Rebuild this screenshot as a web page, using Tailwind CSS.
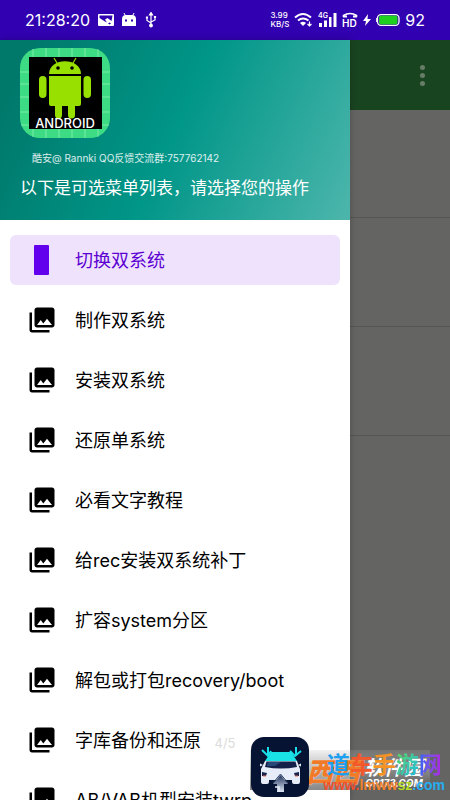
<!DOCTYPE html>
<html lang="zh-CN">
<head>
<meta charset="utf-8">
<meta name="viewport" content="width=device-width, initial-scale=1">
<title>双系统工具</title>
<script src="https://cdn.jsdelivr.net/npm/@tailwindcss/browser@4"></script>
</head>
<body class="h-screen overflow-hidden bg-[#646563] font-['Inter','Noto_Sans_CJK_SC',sans-serif] text-black">
<svg class="hidden" aria-hidden="true">
  <symbol id="photos" viewBox="0 0 24 24"><path d="M22 16V4c0-1.100-.9-2-2-2H8c-1.100 0-2 .9-2 2v12c0 1.100.9 2 2 2h12c1.100 0 2-.9 2-2zm-11-4 2.030 2.710L16 11l4 5H8l3-4zM2 6v14c0 1.100.9 2 2 2h14v-2H4V6H2z"/></symbol>
</svg>
<div class="relative flex h-full flex-col overflow-hidden">
  <header class="flex h-10 shrink-0 items-center justify-between bg-[#3100b0] pr-[25px] pl-[25px] text-white">
    <div class="flex items-center gap-2">
      <time class="text-base">21:28:20</time>
      <svg class="h-3 w-4" viewBox="0 0 16 12" aria-hidden="true"><path fill="#fff" fill-rule="evenodd" d="M1 0h14q1 0 1 1v10q0 1-1 1H1q-1 0-1-1V1q0-1 1-1zM1.500 1.500v2.500L7 7.500l2 1L7 5.500 9.500 4l4 3L14.500 1.500zM10 9.500l1.500 1L13 9.500l-1.500-1z"/></svg>
      <svg class="h-3.5 w-3.5" viewBox="0 0 14 14" aria-hidden="true"><path d="M2 0l1.500 3M12 0l-1.500 3" stroke="#fff"/><path fill="#fff" fill-rule="evenodd" d="M0 13V6q0-4 4-4h6q4 0 4 4v7zM3 6.500h2v2H3zM9 6.500h2v2H9z"/></svg>
      <svg class="h-4 w-3.5" viewBox="0 0 14 16" fill="none" stroke="#fff" stroke-width="1.200" aria-hidden="true"><path d="M7 2v11M7 11 3 8.500V6M7 10l4-2V5"/><path fill="#fff" d="M7 .5 5.500 3h3zM2.500 5h1v1h-1zM10.500 4.500h1v1h-1z"/><circle cx="7" cy="13.500" r="1.300" fill="#fff"/></svg>
    </div>
    <div class="flex items-center gap-[5px]">
      <div class="text-[8px] leading-[9px] font-medium"><div>3.99</div><div>KB/S</div></div>
      <svg class="h-4 w-[19px]" viewBox="0 0 19 16" fill="none" stroke="#fff" stroke-width="2" aria-hidden="true"><path d="M1 5.500q8-7 16 0M4 8.500q5-4 10.500 0"/><path d="M6 11q3-2.500 6 0l-3 3z" fill="#fff" stroke="none"/><path d="M15.500 9.500v4M13.500 12l2 2 2-2" stroke-width="1.200"/></svg>
      <svg class="h-4 w-[19px]" viewBox="0 0 19 16" aria-hidden="true"><path fill="#fff" d="M1 11h3v4H1zM6 8.500h3V15H6zM11 5h2.500v10H11zM15.500 1h3v14h-3z"/><text x="0" y="6" font-size="7" font-weight="600" fill="#fff">4G</text></svg>
      <svg class="h-4 w-4" viewBox="0 0 16 16" fill="none" stroke="#fff" stroke-width="1.600" aria-hidden="true"><path d="M1.500 5V3.500Q8-.5 14.500 3.500V5"/><path d="M1 4.500h4M11 4.500h4" stroke-width="2"/><text x="0" y="15" font-size="10" font-weight="600" fill="#fff" stroke="none">HD</text></svg>
      <svg class="h-3 w-2" viewBox="0 0 8 12" aria-hidden="true"><path fill="#fff" d="M5 0 0 7h3l-1 5 6-7H4.500z"/></svg>
      <svg class="h-3 w-6" viewBox="0 0 24 12" aria-hidden="true"><rect x="1.500" y=".7" width="21.500" height="10.600" rx="3.500" fill="none" stroke="#fff" stroke-width="1.300"/><rect x="3" y="1.500" width="18.500" height="9" rx="2" fill="#20d020"/><path d="M.7 4v4" stroke="#fff"/></svg>
      <span class="text-base">92</span>
    </div>
  </header>

  <main class="flex-1 bg-[#646563]">
    <div class="flex h-[70px] items-center justify-end bg-[#194420] pr-4">
      <button type="button" aria-label="更多选项" class="flex h-10 w-6 flex-col items-center justify-center gap-[3px]">
        <span class="size-[5px] rounded-full bg-[#687c68]"></span><span class="size-[5px] rounded-full bg-[#687c68]"></span><span class="size-[5px] rounded-full bg-[#687c68]"></span>
      </button>
    </div>
    <div class="h-[108px] border-b border-[#565755]"></div>
    <div class="h-[109px] border-b border-[#565755]"></div>
    <div class="h-[109px] border-b border-[#565755]"></div>
  </main>

  <aside class="absolute top-10 bottom-0 left-0 w-[350px] overflow-hidden bg-white shadow-[0_0_6px_rgba(0,0,0,0.25)]">
    <div class="flex h-[180px] flex-col bg-linear-[115deg,#00796b_8%,#009688_50%,#4db6ac] px-5 pt-2 text-white">
      <svg class="size-[90px]" viewBox="0 0 90 90" role="img" aria-label="Android">
        <rect width="90" height="90" rx="20" fill="#3ddc84"/>
        <path d="M13 1v88M26 0v90M39 0v90M52 0v90M65 0v90M78 1v88M0 24h90M0 36h90M0 49h90M0 64h90M1 77h88" stroke="#8af0b4" stroke-width=".8"/>
        <rect x="9" y="9" width="73" height="72" fill="#000"/>
        <g fill="#97e000"><path d="M29 26c0-17 32-17 32 0z"/><path d="M29 28h32v28q0 2-2 2h-4v9a3.500 3.500 0 0 1-7 0v-9h-6v9a3.500 3.500 0 0 1-7 0v-9h-4q-2 0-2-2z"/><rect x="19" y="28" width="7.500" height="22" rx="3.700"/><rect x="63.500" y="28" width="7.500" height="22" rx="3.700"/></g>
        <path d="M37 15l-3-5M53 15l3-5" stroke="#97e000" stroke-width="1.200"/><circle cx="38" cy="20" r="1.800"/><circle cx="52" cy="20" r="1.800"/>
        <text x="45" y="80" text-anchor="middle" font-size="13" font-weight="500" fill="#fff">ANDROID</text>
      </svg>
      <p class="mt-3 pl-3 text-[10px] leading-4 text-white/85">酷安@ Rannki QQ反馈交流群:757762142</p>
      <p class="mt-2 text-[17px] leading-7 whitespace-nowrap">以下是可选菜单列表，请选择您的操作</p>
    </div>
    <nav class="flex flex-col gap-2.5 px-2.5 pt-[15px] text-[18px]">
      <a href="#" aria-current="page" class="flex h-[50px] shrink-0 items-center gap-[18px] rounded-md bg-[#efe2fc] pl-[17px] text-[#5c00d2]"><svg class="size-[30px]" viewBox="0 0 30 30" fill="#6200ee" aria-hidden="true"><rect x="7" width="15" height="30" rx="1"/></svg>切换双系统</a>
      <a href="#" class="flex h-[50px] shrink-0 items-center gap-[18px] pl-[17px]"><svg class="size-[30px]"><use href="#photos"/></svg>制作双系统</a>
      <a href="#" class="flex h-[50px] shrink-0 items-center gap-[18px] pl-[17px]"><svg class="size-[30px]"><use href="#photos"/></svg>安装双系统</a>
      <a href="#" class="flex h-[50px] shrink-0 items-center gap-[18px] pl-[17px]"><svg class="size-[30px]"><use href="#photos"/></svg>还原单系统</a>
      <a href="#" class="flex h-[50px] shrink-0 items-center gap-[18px] pl-[17px]"><svg class="size-[30px]"><use href="#photos"/></svg>必看文字教程</a>
      <a href="#" class="flex h-[50px] shrink-0 items-center gap-[18px] pl-[17px]"><svg class="size-[30px]"><use href="#photos"/></svg>给rec安装双系统补丁</a>
      <a href="#" class="flex h-[50px] shrink-0 items-center gap-[18px] pl-[17px]"><svg class="size-[30px]"><use href="#photos"/></svg>扩容system分区</a>
      <a href="#" class="flex h-[50px] shrink-0 items-center gap-[18px] pl-[17px]"><svg class="size-[30px]"><use href="#photos"/></svg>解包或打包recovery/boot</a>
      <a href="#" class="flex h-[50px] shrink-0 items-center gap-[18px] pl-[17px]"><svg class="size-[30px]"><use href="#photos"/></svg>字库备份和还原</a>
      <a href="#" class="flex h-[50px] shrink-0 items-center gap-[18px] pl-[17px]"><svg class="size-[30px]"><use href="#photos"/></svg>AB/VAB机型安装twrp</a>
    </nav>
  </aside>

  <span class="absolute inset-x-0 bottom-[47px] text-center text-[13px] leading-5 text-[#dcdcdc]">4/5</span>

  <div class="absolute right-5 bottom-[10px] h-10 w-[180px] bg-linear-to-b from-[#bbb]/20 via-[#999]/70 to-[#555]/70"></div>
  <div class="absolute right-[26px] bottom-[11px] flex items-center gap-1 italic">
    <span class="text-[27px] leading-8 font-black text-[#f07a28] text-shadow-[0_0_1px_#fff]">西西</span>
    <span class="flex flex-col items-center text-white"><span class="text-[20px] leading-5 font-bold">软件园</span><span class="text-[10px] leading-[10px] font-bold">CR173.COM</span></span>
  </div>
  <div class="absolute right-[5px] bottom-[7px] flex flex-col items-center font-bold">
    <span class="text-[23px] leading-6"><span class="text-[#1e9ff0]">道</span><span class="text-[#f2582a]">车</span><span class="text-[#f59322]">手</span><span class="bg-linear-to-br from-[#5fd648] to-[#16b4e8] bg-clip-text text-transparent">游</span><span class="bg-linear-to-r from-[#2d62f4] to-[#b01ce0] bg-clip-text text-transparent">网</span></span>
    <span class="font-['Liberation_Sans',sans-serif] text-[14px] leading-4"><span class="text-[#f0502c]">www.</span><span class="text-[#f5822a]">lmww</span><span class="text-[#b4dc28]">sz</span><span class="text-[#28aef0]">.com</span></span>
  </div>
  <svg class="absolute right-[141px] bottom-[3px] h-[60px] w-[58px]" viewBox="0 0 58 60" role="img" aria-label="道车">
    <defs><linearGradient id="road" x1="0" y1="0" x2="0" y2="1"><stop offset="0" stop-color="#22345c"/><stop offset="1" stop-color="#dde6f5"/></linearGradient></defs>
    <rect width="58" height="60" rx="13" fill="#061332"/>
    <path d="M14 24 20 15h20l6 9z" fill="#19e3e6"/>
    <path d="M14 24h32l3 8v13q0 2-2 2h-4q-2 0-2-2v-2H18v2q0 2-2 2h-4q-2 0-2-2V32z" fill="#e6edf8"/>
    <path d="M15.500 24.500h29l1.500 5.500q-16 3-32 0z" fill="#12204a"/><path d="M17 25h13l-6 4h-8z" fill="#264878"/>
    <path d="M12 28l-3-1.500v3zM47 28l3-1.500v3z" fill="#e6edf8"/>
    <path d="M11 35l5 1-1 3h-4zM48 35l-5 1 1 3h4z" fill="#17234c"/><path d="M12 39h3M44 39h3" stroke="#f06848"/>
    <path d="M29.500 38 22 47h4v8h7v-8h4z" fill="url(#road)"/><path d="M29.500 37 22 46M29.500 37l7.500 9" fill="none" stroke="#2a3d66"/>
    <path d="M24 50h4v5" fill="none" stroke="#e6edf8" stroke-width="1.500"/>
    <path d="M17 10v9M11 13l6 6 3-5M45 10v9M39 14l5 5 6-5" fill="none" stroke="#19dfe8" stroke-width="2"/>
  </svg>
</div>
</body>
</html>
